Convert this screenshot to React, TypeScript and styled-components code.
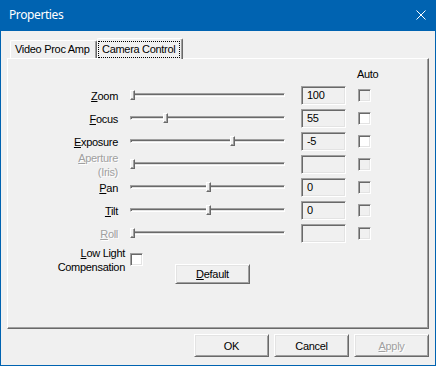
import React from "react";
import styled, { createGlobalStyle } from "styled-components";

const Global = createGlobalStyle`
  html, body { margin: 0; padding: 0; background: #f0f0f0; }
  * { box-sizing: border-box; }
`;

const Window = styled.div`
  width: 436px;
  height: 366px;
  border: 1px solid #0063b1;
  border-top: none;
  display: flex;
  flex-direction: column;
  font-family: "Liberation Sans", Arial, sans-serif;
  font-size: 11px;
  letter-spacing: -0.3px;
  color: #000;
  background: #f0f0f0;
`;

const TitleBar = styled.div`
  height: 31px;
  margin: 0 -1px;
  background: #0063b1;
  display: flex;
  align-items: center;
  justify-content: space-between;
  padding: 0 10px 0 9px;
  color: #fff;
  flex-shrink: 0;
`;

const Title = styled.span`
  font-family: "Noto Sans", "Segoe UI", sans-serif;
  font-size: 12px;
  letter-spacing: -0.4px;
  line-height: 16px;
  margin-top: -1px;
`;

const CloseIcon = styled.svg`
  width: 10px;
  height: 10px;
  margin-right: 0px;
  margin-top: -1px;
`;

const Body = styled.div`
  flex: 1;
  display: flex;
  flex-direction: column;
  padding: 7px 6px 0 6px;
`;

const TabStrip = styled.div`
  display: flex;
  align-items: flex-end;
  height: 20px;
  padding-left: 3px;
`;

const Tab = styled.div<{ $active?: boolean }>`
  position: relative;
  z-index: ${(p) => (p.$active ? 2 : 1)};
  height: ${(p) => (p.$active ? "21px" : "18px")};
  margin-bottom: ${(p) => (p.$active ? "-1px" : "0")};
  width: ${(p) => (p.$active ? "86px" : "87px")};
  background: #f0f0f0;
  border-top: 1px solid #fff;
  border-left: 1px solid #fff;
  border-right: 1px solid #696969;
  box-shadow: inset -1px 0 0 #a0a0a0;
  border-radius: 2px 2px 0 0;
  display: flex;
  align-items: ${(p) => (p.$active ? "flex-start" : "center")};
  padding: ${(p) => (p.$active ? "2px 2px 0 0" : "0 0 0 4px")};
  line-height: 13px;
  white-space: nowrap;
`;

const FocusRect = styled.span`
  display: block;
  border: 1px dotted #000;
  width: 83px;
  height: 17px;
  padding: 1px 0 0 3px;
  line-height: 13px;
`;

const Panel = styled.div`
  width: 422px;
  height: 271px;
  border: 1px solid;
  border-color: #fff #696969 #696969 #fff;
  box-shadow: inset -1px -1px 0 #a0a0a0;
  display: flex;
  flex-direction: column;
  padding-top: 9px;
`;

const AutoHeader = styled.div`
  height: 13px;
  line-height: 13px;
  padding-left: 349px;
  margin-bottom: 5px;
`;

const Rows = styled.div`
  display: flex;
  flex-direction: column;
  gap: 4px;
`;

const Row = styled.div`
  display: flex;
  align-items: center;
  height: 19px;
`;

const Label = styled.div<{ $disabled?: boolean }>`
  width: 110px;
  height: 19px;
  display: flex;
  flex-direction: column;
  justify-content: center;
  align-items: flex-end;
  text-align: right;
  line-height: 14px;
  white-space: nowrap;
  color: ${(p) => (p.$disabled ? "#a0a0a0" : "#000")};
  text-shadow: ${(p) => (p.$disabled ? "1px 1px 0 #fff" : "none")};
`;

const Track = styled.div`
  position: relative;
  margin-left: 12px;
  width: 155px;
  height: 4px;
  border: 1px solid;
  border-color: #a0a0a0 #fff #fff #a0a0a0;
  box-shadow: inset 1px 1px 0 #696969, inset -1px -1px 0 #e3e3e3;
  margin-top: -1px;
`;

const Thumb = styled.div`
  position: absolute;
  top: -4px;
  width: 5px;
  height: 10px;
  background: #f0f0f0;
  border: 1px solid;
  border-color: #fff #696969 #696969 #fff;
  box-shadow: inset -1px -1px 0 #a0a0a0;
`;

const TextBox = styled.div`
  margin-left: 16px;
  width: 45px;
  height: 19px;
  background: #f0f0f0;
  border: 1px solid;
  border-color: #a0a0a0 #fff #fff #a0a0a0;
  box-shadow: inset 1px 1px 0 #696969, inset -1px -1px 0 #e3e3e3;
  padding-left: 5px;
  line-height: 17px;
`;

const Check = styled.div<{ $enabled?: boolean; $ml?: number }>`
  margin-left: ${(p) => p.$ml ?? 12}px;
  width: 13px;
  height: 13px;
  flex-shrink: 0;
  background: ${(p) => (p.$enabled ? "#fff" : "#f0f0f0")};
  border: 1px solid;
  border-color: #a0a0a0 #fff #fff #a0a0a0;
  box-shadow: inset 1px 1px 0 #696969, inset -1px -1px 0 #e3e3e3;
`;

const LowLightRow = styled.div`
  display: flex;
  align-items: flex-start;
  margin-top: 3px;
`;

const LowLabel = styled.div`
  width: 117px;
  text-align: right;
  line-height: 14px;
  white-space: nowrap;
`;

const LowCheck = styled(Check)`
  margin-top: 7px;
`;

const Button = styled.div<{ $disabled?: boolean; $w?: number; $h?: number }>`
  width: ${(p) => p.$w ?? 75}px;
  height: ${(p) => p.$h ?? 23}px;
  background: #f0f0f0;
  border: 1px solid;
  border-color: #fff #696969 #696969 #fff;
  box-shadow: inset 1px 1px 0 #e3e3e3, inset -1px -1px 0 #a0a0a0;
  display: flex;
  align-items: center;
  justify-content: center;
  color: ${(p) => (p.$disabled ? "#a0a0a0" : "#000")};
  text-shadow: ${(p) => (p.$disabled ? "1px 1px 0 #fff" : "none")};
`;

const DefaultButton = styled(Button)`
  margin-left: 32px;
  margin-top: 18px;
`;

const ButtonRow = styled.div`
  display: flex;
  justify-content: flex-end;
  gap: 5px;
  margin-top: 5px;
  padding-right: 0;
`;

type Ctl = {
  key: string;
  label: React.ReactNode;
  disabled?: boolean;
  thumb: number;
  value: string;
  autoEnabled?: boolean;
};

const controls: Ctl[] = [
  { key: "zoom", label: <span><u>Z</u>oom</span>, thumb: 0, value: "100" },
  { key: "focus", label: <span><u>F</u>ocus</span>, thumb: 33, value: "55", autoEnabled: true },
  { key: "exposure", label: <span><u>E</u>xposure</span>, thumb: 100, value: "-5", autoEnabled: true },
  {
    key: "aperture",
    label: (
      <>
        <span><u>A</u>perture</span>
        <span>(Iris)</span>
      </>
    ),
    disabled: true,
    thumb: 0,
    value: "",
  },
  { key: "pan", label: <span><u>P</u>an</span>, thumb: 76, value: "0" },
  { key: "tilt", label: <span><u>T</u>ilt</span>, thumb: 76, value: "0" },
  { key: "roll", label: <span><u>R</u>oll</span>, disabled: true, thumb: 0, value: "" },
];

export default function App() {
  return (
    <>
      <Global />
      <Window>
        <TitleBar>
          <Title>Properties</Title>
          <CloseIcon viewBox="0 0 10 10">
            <path d="M0.5 0.5 L9.5 9.5 M9.5 0.5 L0.5 9.5" stroke="#fff" strokeWidth="1" fill="none" />
          </CloseIcon>
        </TitleBar>
        <Body>
          <TabStrip>
            <Tab>Video Proc Amp</Tab>
            <Tab $active>
              <FocusRect>Camera Control</FocusRect>
            </Tab>
          </TabStrip>
          <Panel>
            <AutoHeader>Auto</AutoHeader>
            <Rows>
              {controls.map((c) => (
                <Row key={c.key}>
                  <Label $disabled={c.disabled}>{c.label}</Label>
                  <Track>
                    <Thumb style={{ left: c.thumb - 1 }} />
                  </Track>
                  <TextBox>{c.value}</TextBox>
                  <Check $enabled={c.autoEnabled} />
                </Row>
              ))}
            </Rows>
            <LowLightRow>
              <LowLabel>
                <u>L</u>ow Light
                <br />
                Compensation
              </LowLabel>
              <LowCheck $enabled $ml={5} />
              <DefaultButton $h={20}>
                <span>
                  <u>D</u>efault
                </span>
              </DefaultButton>
            </LowLightRow>
          </Panel>
          <ButtonRow>
            <Button>OK</Button>
            <Button>Cancel</Button>
            <Button $disabled>
              <span>
                <u>A</u>pply
              </span>
            </Button>
          </ButtonRow>
        </Body>
      </Window>
    </>
  );
}
